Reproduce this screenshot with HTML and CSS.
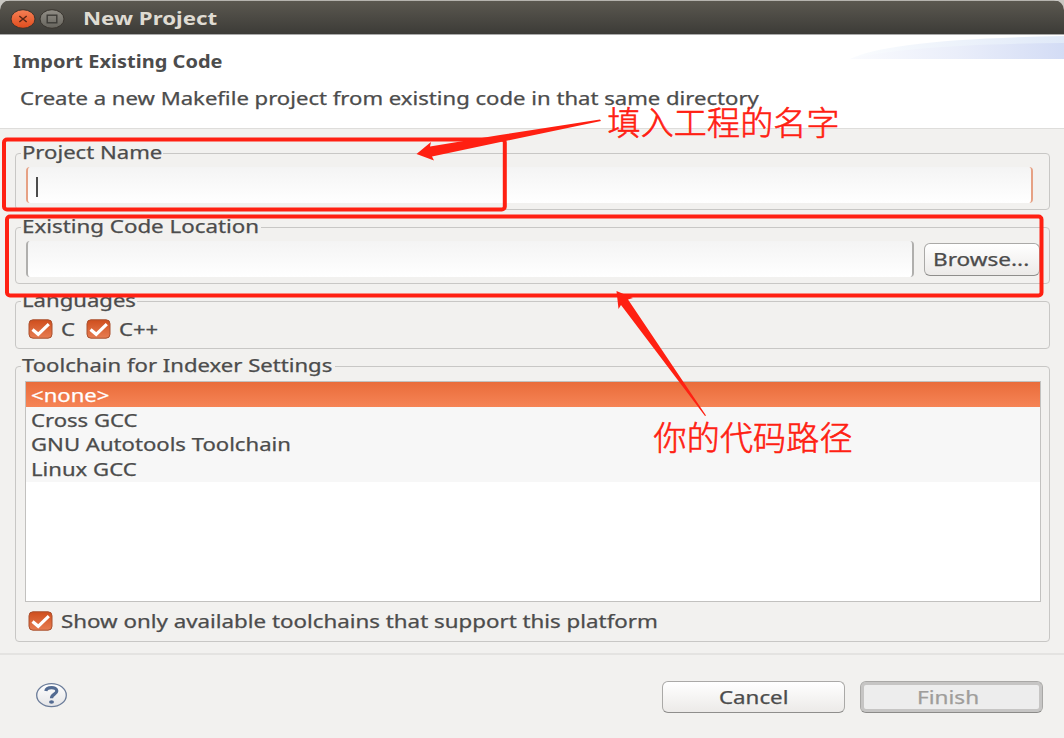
FILE: index.html
```html
<!DOCTYPE html>
<html lang="en">
<head>
<meta charset="utf-8">
<title>New Project</title>
<link rel="stylesheet" href="styles.css">
</head>
<body>
<div class="window">
  <header class="titlebar">
    <svg class="win-btn" width="26" height="20" viewBox="0 0 26 20"><defs><linearGradient id="cl" x2="0" y2="1"><stop stop-color="#f58055"/><stop offset="1" stop-color="#e04c1d"/></linearGradient></defs><ellipse cx="13" cy="10" rx="12" ry="9.3" fill="url(#cl)" stroke="#38342e"/><path d="M9.3 7l7.4 6M16.7 7l-7.4 6" stroke="#5c2716" stroke-width="1.6"/></svg>
    <svg class="win-btn" width="26" height="20" viewBox="0 0 26 20"><defs><linearGradient id="mx" x2="0" y2="1"><stop stop-color="#918e86"/><stop offset="1" stop-color="#66645d"/></linearGradient></defs><ellipse cx="13" cy="10" rx="12" ry="9.3" fill="url(#mx)" stroke="#38342e"/><rect x="8.2" y="6.2" width="9.6" height="7.6" fill="none" stroke="#3c3b37" stroke-width="1.4"/></svg>
    <h1 class="title"><span class="tx tx-title">New Project</span></h1>
  </header>
  <section class="banner">
    <div class="banner-text">
      <h2><span class="tx tx-head">Import Existing Code</span></h2>
      <p><span class="tx tx-desc">Create a new Makefile project from existing code in that same directory</span></p>
    </div>
    <svg class="swoosh" width="214" height="25" viewBox="0 0 214 25"><defs><linearGradient id="sw"><stop stop-color="#fafbfe"/><stop offset=".5" stop-color="#eaeefa"/><stop offset="1" stop-color="#d3dcf5"/></linearGradient><linearGradient id="sv"><stop stop-color="#fafcfe"/><stop offset="1" stop-color="#e0e9f8"/></linearGradient></defs><path d="M0 24Q40 4 214 1V24Z" fill="url(#sv)"/><path d="M0 24Q60 9 214 8V24Z" fill="url(#sw)"/></svg>
  </section>
  <main class="content">
    <fieldset class="group group-name">
      <legend class="lg-name"><span class="tx tx-name">Project Name</span></legend>
      <div class="entry entry-focus"><i class="caret"></i></div>
    </fieldset>
    <fieldset class="group group-loc">
      <legend class="lg-loc"><span class="tx tx-loc">Existing Code Location</span></legend>
      <div class="row">
        <div class="entry"></div>
        <button class="btn btn-browse"><span class="tx tx-browse">Browse...</span></button>
      </div>
    </fieldset>
    <fieldset class="group group-lang">
      <legend class="lg-lang"><span class="tx tx-lang">Languages</span></legend>
      <div class="checks">
        <label class="check check-c"><svg class="box" width="25" height="20" viewBox="0 0 25 20"><use href="#tick"/></svg><span class="tx tx-c">C</span></label>
        <label class="check"><svg class="box" width="25" height="20" viewBox="0 0 25 20"><use href="#tick"/></svg><span class="tx tx-cpp">C++</span></label>
      </div>
    </fieldset>
    <fieldset class="group group-tool">
      <legend class="lg-tool"><span class="tx tx-tool">Toolchain for Indexer Settings</span></legend>
      <ul class="list">
        <li class="selected"><span class="tx tx-none">&lt;none&gt;</span></li>
        <li><span class="tx tx-cross">Cross GCC</span></li>
        <li><span class="tx tx-gnu">GNU Autotools Toolchain</span></li>
        <li><span class="tx tx-linux">Linux GCC</span></li>
      </ul>
      <label class="check check-only"><svg class="box" width="25" height="20" viewBox="0 0 25 20"><use href="#tick"/></svg><span class="tx tx-show">Show only available toolchains that support this platform</span></label>
    </fieldset>
  </main>
  <footer class="footer">
    <svg class="help" width="32" height="25" viewBox="0 0 32 25"><defs><linearGradient id="hp" x2="0" y2="1"><stop stop-color="#fff"/><stop offset="1" stop-color="#e4e4e6"/></linearGradient></defs><ellipse cx="15.5" cy="12.2" rx="14.8" ry="11.5" fill="url(#hp)" stroke="#6b7c99" stroke-width="1.3"/><path d="M9.8 7.9C10.5 3.5 20.8 3.3 20.8 8C20.8 11.3 15.5 11.1 15.5 15.3" fill="none" stroke="#536b92" stroke-width="3.2"/><ellipse cx="15.5" cy="19" rx="2.5" ry="1.8" fill="#536b92"/></svg>
    <button class="btn btn-cancel"><span class="tx tx-cancel">Cancel</span></button>
    <button class="btn btn-finish" disabled><span class="tx tx-finish">Finish</span></button>
  </footer>
  <svg class="notes" width="1064" height="738" viewBox="0 0 1064 738">
    <defs>
      <linearGradient id="ck" x2="0" y2="1"><stop stop-color="#cf4e1d"/><stop offset="1" stop-color="#e77d52"/></linearGradient>
      <g id="tick"><rect x="1" y=".8" width="23" height="18.4" rx="4" fill="url(#ck)" stroke="#a9512f"/><path d="M4.5 10.5L10.2 15.3L20.8 5.2" fill="none" stroke="#fff" stroke-width="3.2"/></g>
    </defs>
    <g fill="none" stroke="#ff2012" stroke-width="4">
      <rect x="4" y="139.5" width="500.8" height="70" rx="3"/>
      <rect x="7" y="216.5" width="1034.5" height="79" rx="3"/>
    </g>
    <g fill="#ff2012">
      <path d="M600 119.5L601 121L432 156.5L434 160.5L416.5 154L431 142L430 146.5L500 135Z"/>
      <path d="M616.5 291L633 298L628 299.5L706 415.5L705 416L621 305L618.5 309Z"/>
      <text class="note" x="607.5" y="135" textLength="232">填入工程的名字</text>
      <text class="note" x="653.5" y="450" textLength="199">你的代码路径</text>
    </g>
  </svg>
</div>
</body>
</html>
```
FILE: styles.css
```css
* { box-sizing: border-box; }
body { margin: 0; font: 17.5px/25px "Noto Sans", sans-serif; color: #4c4c4c; background: #c9c7c2; }
h1, h2, p, ul { margin: 0; padding: 0; font-size: inherit; }
.window { position: relative; width: 1064px; height: 738px; display: flex; flex-direction: column; background: #f2f1ef; overflow: hidden; border-radius: 10px 10px 0 0; }

/* Wide lettering: each label is stretched horizontally from its left edge. */
.tx { display: inline-block; white-space: nowrap; transform-origin: 0 50%; transform: scaleX(1.263); -webkit-text-stroke: .25px currentColor; }
.tx-head { transform: scaleX(1.143); }
.tx-loc, .tx-show, .tx-cancel { transform: scaleX(1.275); }
.tx-browse, .tx-finish { transform: scaleX(1.29); }

.titlebar { height: 35px; flex: none; display: flex; align-items: center; padding: 2px 0 0 10px; background: linear-gradient(#5b5850, #3c3b37); border-top: 1px solid #b5b3ae; border-bottom: 1px solid #aaa; }
.win-btn { margin-right: 3px; }
.title { color: #dfdbd2; margin-left: 15px; font-size: 17px; font-weight: bold; }
.tx-title { transform: scaleX(1.31); -webkit-text-stroke: 0; }
.banner { height: 94px; flex: none; display: flex; justify-content: space-between; background: #fff; border-bottom: 1px solid #dedddb; }
.banner-text { padding: 14px 0 0 13px; }
.banner-text p { padding: 12px 0 0 7px; }
.tx-head { -webkit-text-stroke: 0; }
.swoosh { display: block; }
.content { height: 526px; padding: 13px 14px 0 15px; border-bottom: 2px solid #e4e3e1; }
.group { margin: 0; padding: 0 8px 0 9px; border: 1px solid #c8c7c5; border-radius: 4px; min-width: 0; }
.group legend { height: 22px; line-height: 20px; padding: 0 0 0 1px; margin-left: -4px; white-space: nowrap; }
.lg-name { width: 142px; }
.lg-loc { width: 240px; }
.lg-lang { width: 116px; }
.lg-tool { width: 314px; }
.group-name { height: 68px; }
.group-loc { height: 68px; margin-top: 6px; }
.group-lang { height: 59px; margin-top: 6px; }
.group-tool { height: 287px; margin-top: 6px; }
.row { display: flex; }
.entry { flex: 1; margin: 3px 0 0 1px; height: 36px; background: linear-gradient(#f4f4f4, #fff); border: solid #b0afad; border-width: 0 2px; border-radius: 4px; }
.entry-focus { border-color: #e6a184; margin-right: 8px; padding: 10px 0 0 8px; }
.caret { display: block; width: 2px; height: 20px; background: #4c4c4c; }
.btn { font: inherit; line-height: 24px; color: #4c4c4c; padding: 0; text-align: left; white-space: nowrap; border: 1px solid #aaa9a7; border-bottom-color: #8f8e8c; border-radius: 6px; background: linear-gradient(#fff, #eceae8); }
.btn-browse { width: 116px; height: 33px; margin: 5px 1px 0 10px; padding: 0 0 2px 8px; }
.checks { display: flex; padding: 6px 0 0 3px; }
.check { display: flex; align-items: center; gap: 8px; height: 22px; }
.check-c { width: 58px; }
.list { list-style: none; height: 221px; margin-top: 4px; border: 1px solid #c2c1bf; background: #fff; }
.list li { height: 25px; line-height: 25px; padding-left: 5px; background: #f7f7f7; }
.list .selected { line-height: 26px; color: #fff; background: linear-gradient(#e96c3a, #f68456); }
.list li:nth-child(2) { line-height: 26px; }
.check-only { margin: 8px 0 0 3px; }
.footer { flex: 1; display: flex; padding: 26px 21px 0 35px; }
.help { margin: 2px auto 0 1px; }
.btn-cancel { width: 183px; height: 32px; padding-left: 56px; }
.btn-finish { width: 183px; height: 32px; margin-left: 15px; padding: 0 0 1px 56px; color: #9f9d9b; background: #ededed; border: 1px solid #a9a8a6; border-bottom-color: #8c8b89; box-shadow: inset 0 0 0 3px #c6c5c4; }
.notes { position: absolute; inset: 0; pointer-events: none; }
.note { font-family: "Noto Sans CJK SC", sans-serif; font-size: 33px; font-weight: 300; stroke: #ff2012; stroke-width: .6; }
```
